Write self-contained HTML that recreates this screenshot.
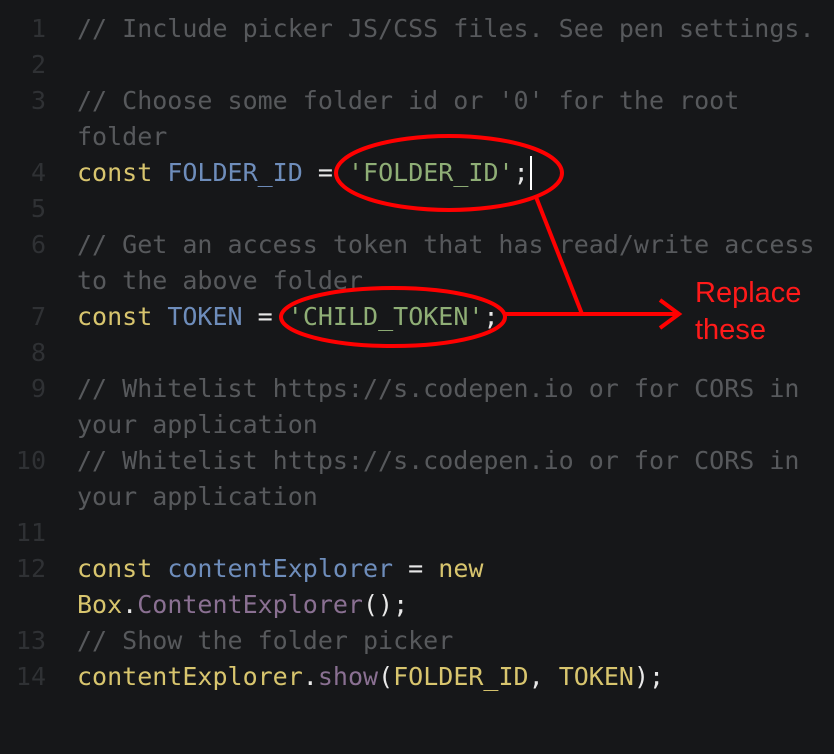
<!DOCTYPE html>
<html><head><meta charset="utf-8"><style>
html,body{margin:0;padding:0;background:#161719;width:834px;height:754px;overflow:hidden}
.code{position:absolute;left:0;top:11px;font-family:"DejaVu Sans Mono","Liberation Mono",monospace;font-size:25px;line-height:36px;color:#d0d0d0}
.r{height:36px;position:relative;white-space:pre}
.n{position:absolute;left:0;width:46px;text-align:right;color:#2f3134}
.t{position:absolute;left:77px}
.c{color:#57595c}.k{color:#d8c56e}.v{color:#6e8dbb}.s{color:#8fae76}.p{color:#8a7092}.w{color:#e8e8e8}
svg{position:absolute;left:0;top:0}
.lab{position:absolute;left:695px;font-family:"Liberation Sans",sans-serif;font-size:29px;color:#ff1a1a;line-height:36px}
</style></head><body>
<div class="code"><div class="r"><span class="n">1</span><span class="t c">// Include picker JS/CSS files. See pen settings.</span></div><div class="r"><span class="n">2</span></div><div class="r"><span class="n">3</span><span class="t c">// Choose some folder id or '0' for the root</span></div><div class="r"><span class="t c">folder</span></div><div class="r"><span class="n">4</span><span class="t"><span class="k">const</span> <span class="v">FOLDER_ID</span> <span class="w">=</span> <span class="s">'FOLDER_ID'</span><span class="w">;</span></span></div><div class="r"><span class="n">5</span></div><div class="r"><span class="n">6</span><span class="t c">// Get an access token that has read/write access</span></div><div class="r"><span class="t c">to the above folder</span></div><div class="r"><span class="n">7</span><span class="t"><span class="k">const</span> <span class="v">TOKEN</span> <span class="w">=</span> <span class="s">'CHILD_TOKEN'</span><span class="w">;</span></span></div><div class="r"><span class="n">8</span></div><div class="r"><span class="n">9</span><span class="t c">// Whitelist https://s.codepen.io or for CORS in</span></div><div class="r"><span class="t c">your application</span></div><div class="r"><span class="n">10</span><span class="t c">// Whitelist https://s.codepen.io or for CORS in</span></div><div class="r"><span class="t c">your application</span></div><div class="r"><span class="n">11</span></div><div class="r"><span class="n">12</span><span class="t"><span class="k">const</span> <span class="v">contentExplorer</span> <span class="w">=</span> <span class="k">new</span></span></div><div class="r"><span class="t"><span class="k">Box</span><span class="w">.</span><span class="p">ContentExplorer</span><span class="w">();</span></span></div><div class="r"><span class="n">13</span><span class="t c">// Show the folder picker</span></div><div class="r"><span class="n">14</span><span class="t"><span class="k">contentExplorer</span><span class="w">.</span><span class="p">show</span><span class="w">(</span><span class="k">FOLDER_ID</span><span class="w">, </span><span class="k">TOKEN</span><span class="w">);</span></span></div></div>
<svg width="834" height="754">
<rect x="530" y="156" width="2" height="34" fill="#fff"/>
<g fill="none" stroke="#ff0000" stroke-width="4">
<ellipse cx="449" cy="173" rx="113" ry="37"/>
<ellipse cx="393" cy="317" rx="112" ry="29"/>
<line x1="536" y1="197" x2="582" y2="314"/>
<line x1="505" y1="314" x2="679" y2="314"/>
<polyline points="660,300 679,314 660,328"/>
</g>
</svg>
<div class="lab" style="top:275px">Replace</div>
<div class="lab" style="top:312px">these</div>
</body></html>
